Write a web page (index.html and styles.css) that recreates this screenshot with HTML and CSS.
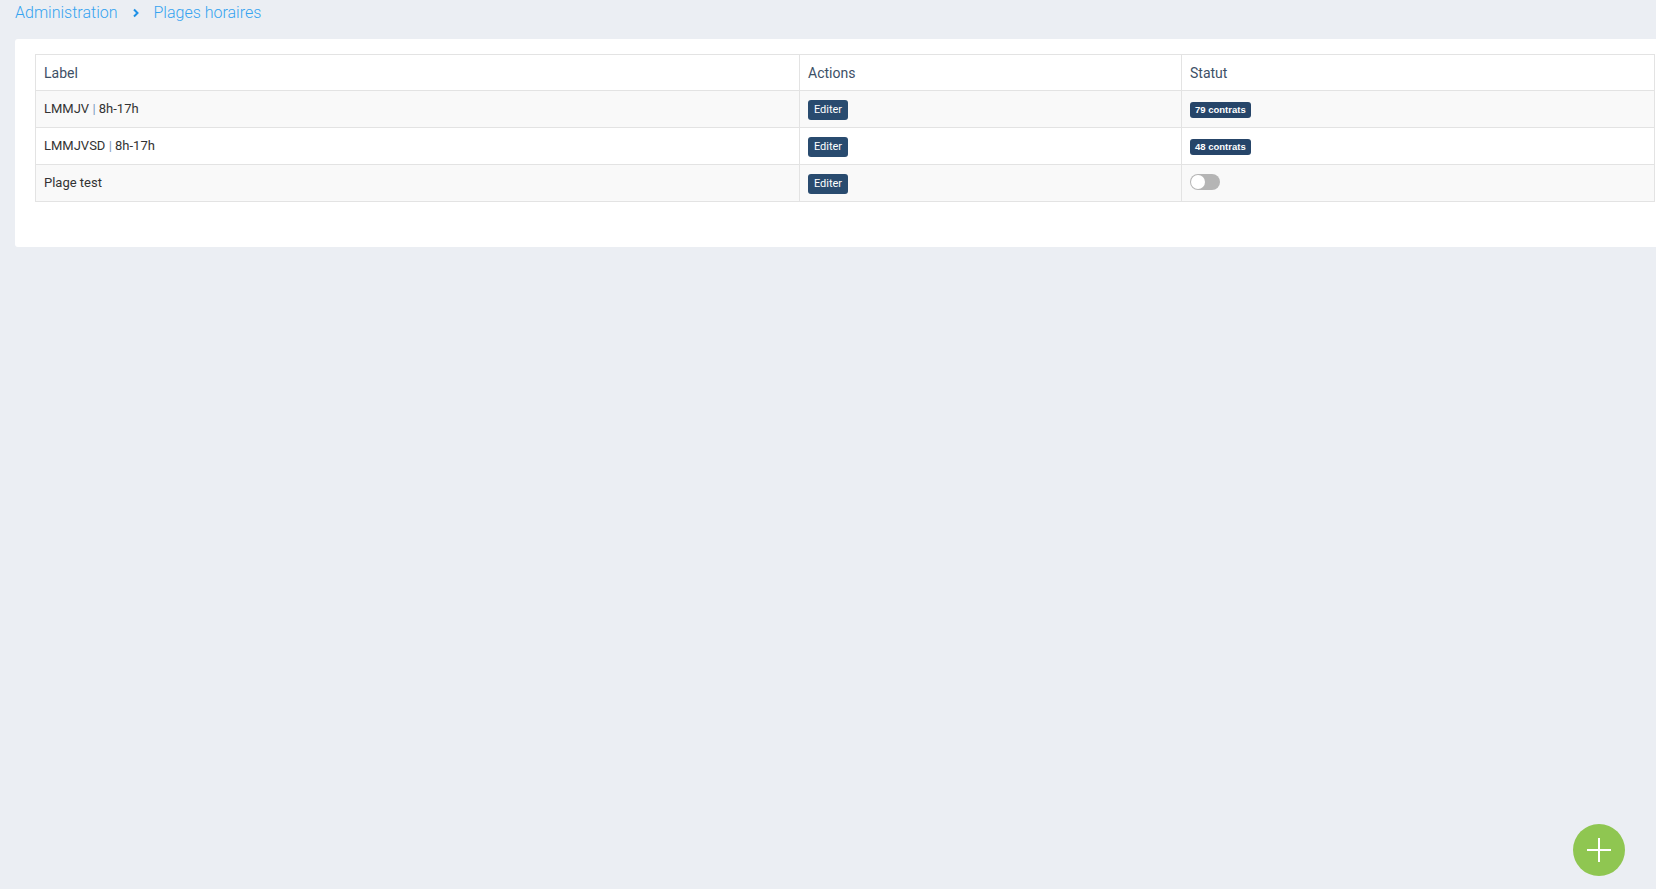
FILE: index.html
```html
<!DOCTYPE html>
<html lang="fr">
<head>
    <meta charset="UTF-8">
    <title>Plages horaires - Administration</title>
    <link rel="stylesheet" href="styles.css">
</head>
<body>
    <nav class="breadcrumb">
        <a href="#">Administration</a>
        <svg class="chevron" width="8" height="10" viewBox="0 0 8 10"><path d="M2 1.5 L5.5 5 L2 8.5" fill="none" stroke="currentColor" stroke-width="2"/></svg>
        <a href="#">Plages horaires</a>
    </nav>

    <div class="card">
        <table class="grid">
            <thead>
                <tr>
                    <th class="col-label">Label</th>
                    <th class="col-actions">Actions</th>
                    <th>Statut</th>
                </tr>
            </thead>
            <tbody>
                <tr>
                    <td>LMMJV <span class="sep">|</span> 8h-17h</td>
                    <td><button class="btn-edit">Editer</button></td>
                    <td><span class="badge">79 contrats</span></td>
                </tr>
                <tr>
                    <td>LMMJVSD <span class="sep">|</span> 8h-17h</td>
                    <td><button class="btn-edit">Editer</button></td>
                    <td><span class="badge">48 contrats</span></td>
                </tr>
                <tr>
                    <td>Plage test</td>
                    <td><button class="btn-edit">Editer</button></td>
                    <td><span class="toggle"><span class="knob"></span></span></td>
                </tr>
            </tbody>
        </table>
    </div>

    <button class="fab" title="Ajouter">
        <svg width="26" height="26" viewBox="0 0 26 26"><path d="M13 1 V25 M1 13 H25" stroke="#fff" stroke-width="2"/></svg>
    </button>
</body>
</html>
```

FILE: styles.css
```css
body {
    margin: 0;
    background: #ebeef3;
    font-family: Roboto, "Liberation Sans", sans-serif;
    color: #333;
    overflow: hidden;
    min-height: 100vh;
}

.breadcrumb {
    display: flex;
    align-items: center;
    height: 24px;
    padding-left: 15px;
    margin-bottom: 15px;
    font-size: 16px;
    font-weight: 300;
}

.breadcrumb a {
    color: #35a3f0;
    text-decoration: none;
}

.chevron {
    color: #1e90e6;
    margin: 2px 13px 0 15px;
}

.card {
    margin-left: 15px;
    width: 1680px;
    box-sizing: border-box;
    background: #fff;
    border-radius: 3px;
    padding: 15px 20px 45px;
}

.grid {
    width: 1620px;
    border-collapse: collapse;
    font-size: 13px;
}

.grid th,
.grid td {
    border: 1px solid #e3e3e3;
    text-align: left;
    padding: 0 8px;
}

.grid th {
    height: 35px;
    font-size: 14px;
    font-weight: 400;
    color: #3d4f66;
}

.grid td {
    height: 34px;
    padding-bottom: 2px;
}

.grid tbody tr:nth-child(odd) {
    background: #f9f9f9;
}

.col-label {
    width: 747px;
}

.col-actions {
    width: 365px;
}

.sep {
    color: #7b97c0;
}

.btn-edit {
    background: #294b6f;
    color: #fff;
    border: none;
    border-radius: 3px;
    font-family: inherit;
    font-size: 11px;
    height: 20px;
    width: 40px;
    padding: 0;
    margin-top: 3px;
    cursor: pointer;
}

.badge {
    display: inline-block;
    background: #264569;
    color: #fff;
    font-family: "Liberation Sans", Arial, sans-serif;
    font-weight: bold;
    font-size: 9.5px;
    line-height: 16px;
    height: 16px;
    padding: 0 5px;
    border-radius: 3px;
    margin-top: 3px;
}

.toggle {
    display: inline-block;
    position: relative;
    width: 30px;
    height: 16px;
    border-radius: 8px;
    background: #b5b5b5;
    vertical-align: middle;
}

.knob {
    position: absolute;
    left: 1px;
    top: 1px;
    width: 14px;
    height: 14px;
    border-radius: 50%;
    background: #fff;
}

.fab {
    position: fixed;
    left: 1573px;
    top: 824px;
    width: 52px;
    height: 52px;
    border-radius: 50%;
    border: none;
    background: #8fc651;
    display: flex;
    align-items: center;
    justify-content: center;
    padding: 0;
    cursor: pointer;
}
```
